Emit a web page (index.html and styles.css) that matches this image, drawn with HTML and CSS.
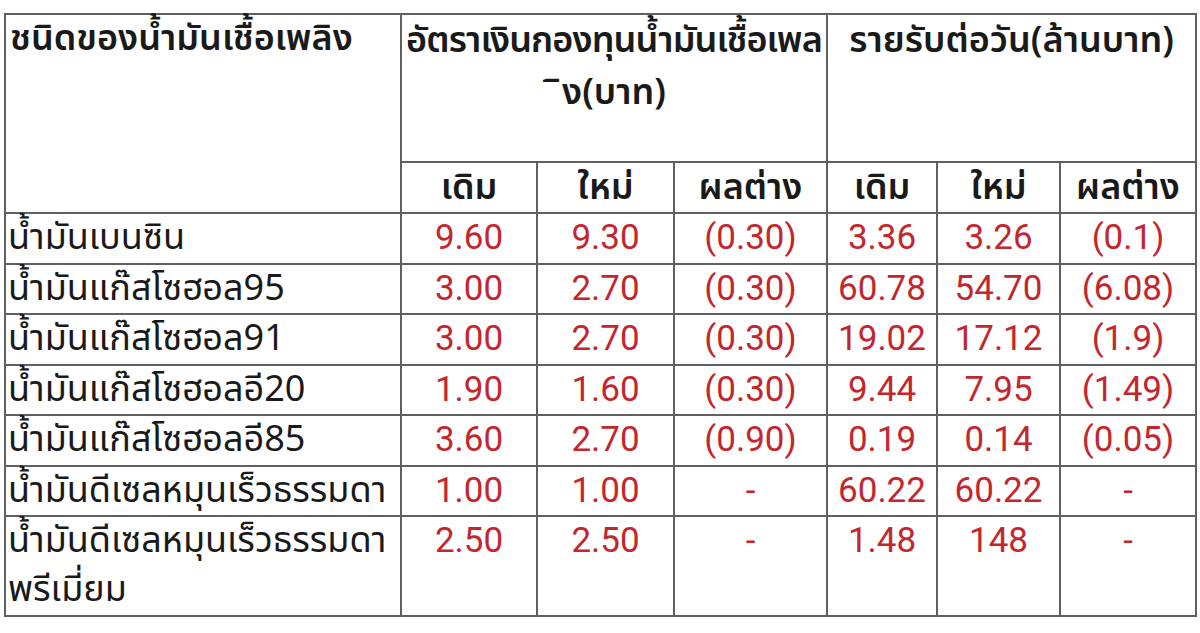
FILE: index.html
```html
<!DOCTYPE html>
<html lang="th">
<head>
<meta charset="utf-8">
<title>อัตราเงินกองทุนน้ำมันเชื้อเพลิง</title>
<link rel="stylesheet" href="styles.css">
</head>
<body>
<table class="fuel">
  <colgroup>
    <col class="c-name">
    <col class="c-a1"><col class="c-a2"><col class="c-a3">
    <col class="c-b1"><col class="c-b2"><col class="c-b3">
  </colgroup>
  <thead>
    <tr class="h1">
      <th rowspan="2" class="name-head">ชนิดของน้ำมันเชื้อเพลิง</th>
      <th colspan="3" class="group-head"><span class="squeeze">อัตราเงินกองทุนน้ำมันเชื้อเพล</span><br>ิง(บาท)</th>
      <th colspan="3" class="group-head">รายรับต่อวัน(ล้านบาท)</th>
    </tr>
    <tr class="h2">
      <th>เดิม</th><th>ใหม่</th><th>ผลต่าง</th>
      <th>เดิม</th><th>ใหม่</th><th>ผลต่าง</th>
    </tr>
  </thead>
  <tbody>
    <tr><td class="label">น้ำมันเบนซิน</td><td>9.60</td><td>9.30</td><td>(0.30)</td><td>3.36</td><td>3.26</td><td>(0.1)</td></tr>
    <tr><td class="label">น้ำมันแก๊สโซฮอล95</td><td>3.00</td><td>2.70</td><td>(0.30)</td><td>60.78</td><td>54.70</td><td>(6.08)</td></tr>
    <tr><td class="label">น้ำมันแก๊สโซฮอล91</td><td>3.00</td><td>2.70</td><td>(0.30)</td><td>19.02</td><td>17.12</td><td>(1.9)</td></tr>
    <tr><td class="label">น้ำมันแก๊สโซฮอลอี20</td><td>1.90</td><td>1.60</td><td>(0.30)</td><td>9.44</td><td>7.95</td><td>(1.49)</td></tr>
    <tr><td class="label">น้ำมันแก๊สโซฮอลอี85</td><td>3.60</td><td>2.70</td><td>(0.90)</td><td>0.19</td><td>0.14</td><td>(0.05)</td></tr>
    <tr><td class="label">น้ำมันดีเซลหมุนเร็วธรรมดา</td><td>1.00</td><td>1.00</td><td>-</td><td>60.22</td><td>60.22</td><td>-</td></tr>
    <tr class="tall"><td class="label">น้ำมันดีเซลหมุนเร็วธรรมดา<br>พรีเมี่ยม</td><td>2.50</td><td>2.50</td><td>-</td><td>1.48</td><td>148</td><td>-</td></tr>
  </tbody>
</table>
</body>
</html>
```

FILE: styles.css
```css
html, body {
  margin: 0;
  padding: 0;
  background: #ffffff;
}

body {
  padding: 13px 0 0 4px;
}

.fuel {
  border-collapse: collapse;
  table-layout: fixed;
  width: 1191px;
  font-family: "Noto Sans Thai", "Noto Sans", "DejaVu Sans", sans-serif;
  color: #1a1a1a;
}

.c-name { width: 396px; }
.c-a1 { width: 136px; }
.c-a2 { width: 137px; }
.c-a3 { width: 153px; }
.c-b1 { width: 110px; }
.c-b2 { width: 123px; }
.c-b3 { width: 136px; }

.fuel th,
.fuel td {
  border: 2px solid #606060;
  padding: 0;
  vertical-align: top;
  font-size: 36px;
  line-height: 48px;
  white-space: nowrap;
}

.fuel th {
  font-weight: 600;
  text-align: center;
}

.h1 { height: 148px; }
.h2 { height: 51px; }
.h2 th { vertical-align: middle; }

.name-head {
  text-align: left !important;
  padding-left: 4px !important;
}

.group-head {
  line-height: 52px !important;
}

.squeeze {
  letter-spacing: -0.9px;
}

.fuel tbody tr { height: 50.5px; }
.fuel tbody tr.tall { height: 99px; }

.fuel td {
  text-align: center;
  color: #c4262e;
  font-family: Roboto, "Noto Sans", sans-serif;
  font-size: 35px;
}

.fuel td.label {
  text-align: left;
  color: #1a1a1a;
  font-family: "Noto Sans Thai", "Noto Sans", "DejaVu Sans", sans-serif;
  font-size: 36px;
  line-height: 47px;
  padding: 1px 0 0 2px;
}

.fuel tr.tall td.label {
  line-height: 49px;
  padding-top: 0;
}
```
